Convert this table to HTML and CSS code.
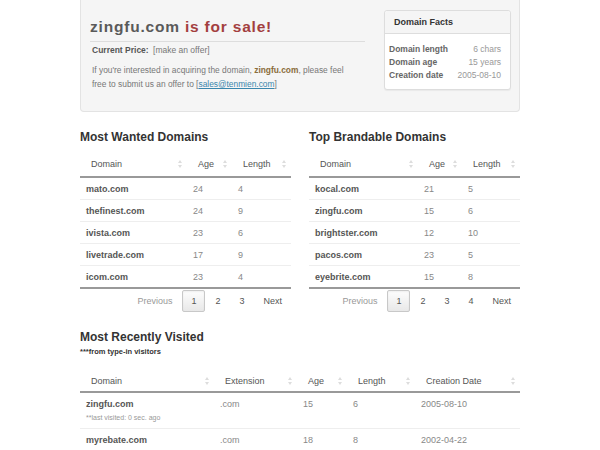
FILE: index.html
```html
<!DOCTYPE html>
<html lang="en">

<head>
    <meta charset="UTF-8">
    <meta name="viewport" content="width=device-width, initial-scale=1.0">
    <title>zingfu.com is for sale!</title>
    <link rel="stylesheet" href="styles.css">
</head>

<body>
    <div class="container">
        <div class="hero">
            <div class="hero-main">
                <h1><span class="name">zingfu.com</span> <span class="sale">is for sale!</span></h1>
                <p class="price"><b>Current Price:</b> [make an offer]</p>
                <p class="pitch">If you're interested in acquiring the domain, <b class="dom">zingfu.com</b>, please feel free to submit us an offer to [<a href="#">sales@tenmien.com</a>]</p>
            </div>
            <div class="facts">
                <div class="facts-head">Domain Facts</div>
                <div class="facts-body">
                    <div class="fact"><b>Domain length</b><span>6 chars</span></div>
                    <div class="fact"><b>Domain age</b><span>15 years</span></div>
                    <div class="fact"><b>Creation date</b><span>2005-08-10</span></div>
                </div>
            </div>
        </div>

        <div class="lists">
            <div class="list">
                <h2>Most Wanted Domains</h2>
                <table class="grid">
                    <colgroup><col style="width: 107px"><col style="width: 45px"><col></colgroup>
                    <thead>
                        <tr><th>Domain<i class="sort"></i></th><th>Age<i class="sort"></i></th><th>Length<i class="sort"></i></th></tr>
                    </thead>
                    <tbody>
                        <tr><td class="dn">mato.com</td><td>24</td><td>4</td></tr>
                        <tr><td class="dn">thefinest.com</td><td>24</td><td>9</td></tr>
                        <tr><td class="dn">ivista.com</td><td>23</td><td>6</td></tr>
                        <tr><td class="dn">livetrade.com</td><td>17</td><td>9</td></tr>
                        <tr><td class="dn">icom.com</td><td>23</td><td>4</td></tr>
                    </tbody>
                </table>
                <div class="pager">
                    <span class="off">Previous</span>
                    <span class="on">1</span>
                    <span>2</span>
                    <span>3</span>
                    <span>Next</span>
                </div>
            </div>
            <div class="list">
                <h2>Top Brandable Domains</h2>
                <table class="grid">
                    <colgroup><col style="width: 109px"><col style="width: 44px"><col></colgroup>
                    <thead>
                        <tr><th>Domain<i class="sort"></i></th><th>Age<i class="sort"></i></th><th>Length<i class="sort"></i></th></tr>
                    </thead>
                    <tbody>
                        <tr><td class="dn">kocal.com</td><td>21</td><td>5</td></tr>
                        <tr><td class="dn">zingfu.com</td><td>15</td><td>6</td></tr>
                        <tr><td class="dn">brightster.com</td><td>12</td><td>10</td></tr>
                        <tr><td class="dn">pacos.com</td><td>23</td><td>5</td></tr>
                        <tr><td class="dn">eyebrite.com</td><td>15</td><td>8</td></tr>
                    </tbody>
                </table>
                <div class="pager">
                    <span class="off">Previous</span>
                    <span class="on">1</span>
                    <span>2</span>
                    <span>3</span>
                    <span>4</span>
                    <span>Next</span>
                </div>
            </div>
        </div>

        <div class="recent">
            <h2>Most Recently Visited</h2>
            <p class="note">***from type-in visitors</p>
            <table class="grid visits">
                <colgroup><col style="width: 134px"><col style="width: 83px"><col style="width: 50px"><col style="width: 68px"><col></colgroup>
                <thead>
                    <tr><th>Domain<i class="sort"></i></th><th>Extension<i class="sort"></i></th><th>Age<i class="sort"></i></th><th>Length<i class="sort"></i></th><th>Creation Date<i class="sort"></i></th></tr>
                </thead>
                <tbody>
                    <tr><td class="dn">zingfu.com<small>**last visited: 0 sec. ago</small></td><td>.com</td><td>15</td><td>6</td><td>2005-08-10</td></tr>
                    <tr><td class="dn">myrebate.com<small>**last visited: 1 sec. ago</small></td><td>.com</td><td>18</td><td>8</td><td>2002-04-22</td></tr>
                </tbody>
            </table>
        </div>
    </div>
</body>

</html>
```

FILE: styles.css
```css
body {
    margin: 0;
    background: #fff;
    color: #555;
    font-family: "Liberation Sans", Arial, sans-serif;
    font-size: 9px;
}

.container {
    width: 440px;
    margin: 0 auto;
}

/* hero */
.hero {
    display: grid;
    grid-template-columns: 275px 127px;
    column-gap: 19px;
    padding: 10px 9px 20px 9px;
    background: #f5f5f5;
    border: 1px solid #e3e3e3;
    border-top: none;
    border-radius: 0 0 4px 4px;
}

.hero h1 {
    margin: 7px 0 4px 0;
    font-size: 15.5px;
    line-height: 20px;
    letter-spacing: 0.8px;
    font-weight: bold;
}

.hero .name {
    color: #5a5a5a;
}

.hero .sale {
    color: #a33f3f;
}

.price {
    margin: 0;
    padding: 2px 0 0 2px;
    border-top: 1px solid #ddd;
    font-size: 8.5px;
    line-height: 12px;
    color: #777;
}

.price b {
    color: #555;
    margin-right: 2px;
}

.pitch {
    margin: 7px 0 0 0;
    padding: 0 12px 0 2px;
    font-size: 8.4px;
    line-height: 14px;
    color: #777;
}

.pitch .dom {
    color: #8a6d3b;
}

.pitch a {
    color: #3a87ad;
}

.facts {
    align-self: start;
    background: #fff;
    border: 1px solid #ddd;
    border-radius: 3px;
    box-shadow: 0 1px 1px rgba(0, 0, 0, 0.05);
}

.facts-head {
    height: 22px;
    line-height: 22px;
    padding-left: 9px;
    background: #f5f5f5;
    border-bottom: 1px solid #ddd;
    border-radius: 3px 3px 0 0;
    font-weight: bold;
    color: #333;
}

.facts-body {
    padding: 9px 9px 7px 4px;
    font-size: 8.5px;
}

.fact {
    display: flex;
    justify-content: space-between;
    line-height: 13px;
}

.fact b {
    color: #666;
}

.fact span {
    color: #999;
}

/* lists */
h2 {
    margin: 0 0 7px 0;
    font-size: 12px;
    line-height: 16px;
    color: #333;
}

.lists {
    display: grid;
    grid-template-columns: 211px 211px;
    column-gap: 18px;
    margin-top: 17px;
}

.grid {
    width: 100%;
    border-collapse: collapse;
    table-layout: fixed;
    border-bottom: 2px solid #999;
}

.grid th {
    position: relative;
    height: 24px;
    padding: 0 0 0 11px;
    text-align: left;
    font-weight: normal;
    color: #555;
    border-bottom: 2px solid #999;
}

.grid td {
    height: 21px;
    padding: 0 0 0 6px;
    border-top: 1px solid #eee;
    color: #888;
}

.grid td.dn {
    font-weight: bold;
    color: #555;
}

.sort {
    position: absolute;
    right: 4px;
    top: 50%;
    margin-top: -4px;
    width: 5px;
    height: 8px;
}

.sort::before,
.sort::after {
    content: "";
    position: absolute;
    left: 0;
    border-left: 2.5px solid transparent;
    border-right: 2.5px solid transparent;
}

.sort::before {
    top: 0;
    border-bottom: 3px solid #ddd;
}

.sort::after {
    bottom: 0;
    border-top: 3px solid #ddd;
}

.pager {
    display: flex;
    justify-content: flex-end;
    margin-top: 1px;
    height: 22px;
}

.pager span {
    padding: 0 9px;
    margin-left: 1px;
    line-height: 22px;
    font-size: 9px;
    color: #555;
}

.pager .off {
    color: #999;
}

.pager .on {
    border: 1px solid #c8c8c8;
    border-radius: 2px;
    line-height: 20px;
    padding: 0 8px;
    background: linear-gradient(#fdfdfd, #e8e8e8);
    box-shadow: inset 0 1px 2px rgba(0, 0, 0, 0.06);
}

/* recent */
.recent {
    margin-top: 17px;
}

.recent h2 {
    margin-bottom: 2px;
}

.note {
    margin: 0 0 13px 0;
    font-size: 7.5px;
    line-height: 10px;
    font-weight: bold;
    color: #333;
}

.visits th {
    height: 21px;
}

.visits td {
    height: auto;
    vertical-align: top;
    padding: 5px 0 4px 6px;
    line-height: 12px;
}

.visits small {
    display: block;
    margin-top: 2px;
    font-size: 7px;
    line-height: 12px;
    font-weight: normal;
    color: #999;
}
```
